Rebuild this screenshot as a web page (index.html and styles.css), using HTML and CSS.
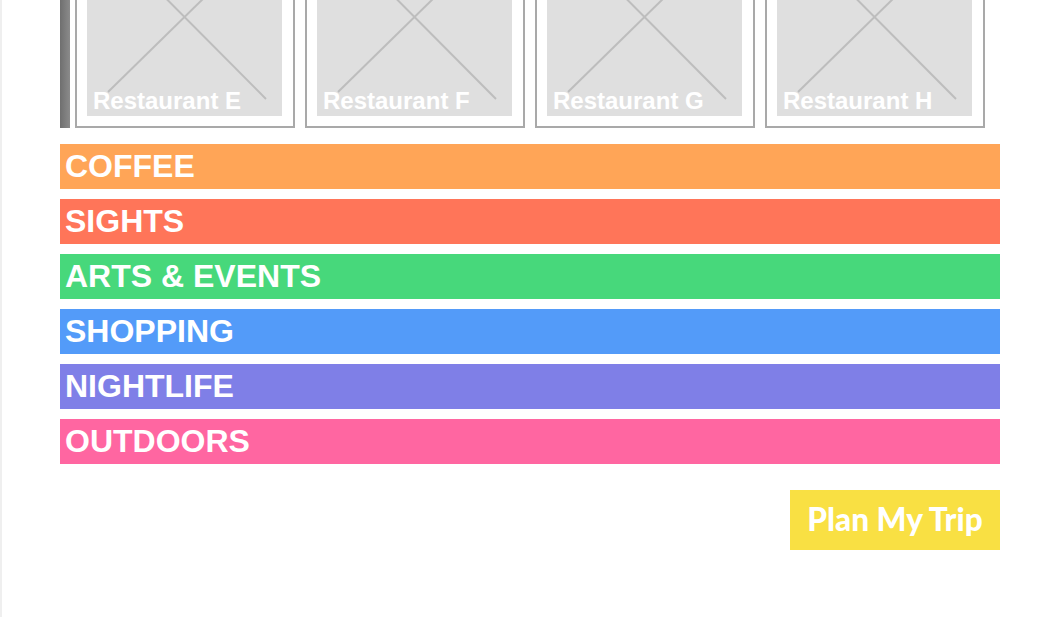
FILE: index.html
```html
<!DOCTYPE html>
<html lang="en">
<head>
    <meta charset="UTF-8">
    <meta name="viewport" content="width=device-width, initial-scale=1.0">
    <title>trip planner</title>
    <link rel="stylesheet" href="styles.css">
</head>
<body>
    <div class="page">
        <div class="places">
            <div class="scrollbar"></div>
            <div class="card">
                <div class="thumb">
                    <svg width="195" height="198" viewBox="0 0 195 198"><line x1="16" y1="17" x2="179" y2="181" /><line x1="174" y1="24" x2="21" y2="174" /></svg>
                    <span class="name">Restaurant E</span>
                </div>
            </div>
            <div class="card">
                <div class="thumb">
                    <svg width="195" height="198" viewBox="0 0 195 198"><line x1="16" y1="17" x2="179" y2="181" /><line x1="174" y1="24" x2="21" y2="174" /></svg>
                    <span class="name">Restaurant F</span>
                </div>
            </div>
            <div class="card">
                <div class="thumb">
                    <svg width="195" height="198" viewBox="0 0 195 198"><line x1="16" y1="17" x2="179" y2="181" /><line x1="174" y1="24" x2="21" y2="174" /></svg>
                    <span class="name">Restaurant G</span>
                </div>
            </div>
            <div class="card">
                <div class="thumb">
                    <svg width="195" height="198" viewBox="0 0 195 198"><line x1="16" y1="17" x2="179" y2="181" /><line x1="174" y1="24" x2="21" y2="174" /></svg>
                    <span class="name">Restaurant H</span>
                </div>
            </div>
        </div>

        <div class="categories">
            <div class="cat coffee">COFFEE</div>
            <div class="cat sights">SIGHTS</div>
            <div class="cat arts">ARTS &amp; EVENTS</div>
            <div class="cat shopping">SHOPPING</div>
            <div class="cat nightlife">NIGHTLIFE</div>
            <div class="cat outdoors">OUTDOORS</div>
        </div>

        <div class="actions">
            <button class="plan">Plan My Trip</button>
        </div>
    </div>
</body>
</html>
```

FILE: styles.css
```css
body {
    margin: 0;
    background: #fff;
    font-family: "Liberation Sans", Arial, sans-serif;
}
.page {
    margin-top: -94px;
    padding: 0 60px 0 58px;
    border-left: 2px solid #efefef;
    min-height: 711px;
}
.places {
    display: flex;
    align-items: stretch;
    gap: 10px;
}
.scrollbar {
    width: 10px;
    margin-right: -5px;
    background: linear-gradient(to right, #6f6f6f, #8b8b8b);
}
.card {
    width: 220px;
    box-sizing: border-box;
    border: 2px solid #a9a9a9;
    padding: 10px;
    background: #fff;
}
.thumb {
    position: relative;
    width: 195px;
    height: 198px;
    background: #dfdfdf;
    overflow: hidden;
}
.thumb svg {
    display: block;
}
.thumb line {
    stroke: #bdbdbd;
    stroke-width: 2;
}
.name {
    position: absolute;
    left: 6px;
    bottom: 3px;
    font-size: 24px;
    line-height: 24px;
    font-weight: bold;
    color: #fff;
}
.categories {
    margin-top: 16px;
    display: flex;
    flex-direction: column;
    gap: 10px;
}
.cat {
    height: 45px;
    box-sizing: border-box;
    padding: 0 5px;
    font-size: 32px;
    line-height: 44px;
    font-weight: bold;
    color: #fff;
}
.coffee { background: #ffa557; }
.sights { background: #ff7559; }
.arts { background: #47d87b; }
.shopping { background: #539bf9; }
.nightlife { background: #7f7fe7; }
.outdoors { background: #ff66a1; }
.actions {
    display: flex;
    justify-content: flex-end;
    margin-top: 26px;
}
.plan {
    width: 210px;
    height: 60px;
    border: none;
    padding: 0 0 2px;
    background: #f9e043;
    color: #fff;
    font-family: Lato, sans-serif;
    font-weight: 900;
    font-size: 31.5px;
    cursor: pointer;
}
```
